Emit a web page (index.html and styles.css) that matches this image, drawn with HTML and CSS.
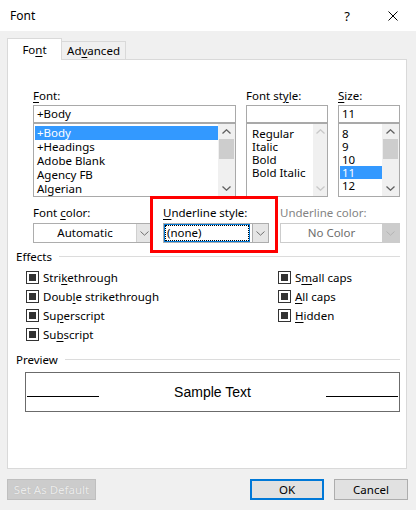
FILE: index.html
```html
<!DOCTYPE html>
<html>
<head>
<meta charset="utf-8">
<link rel="stylesheet" href="styles.css">
</head>
<body>
<div class="window">
  <div class="titlebar">
    <span class="title">Font</span>
    <span class="tbtn help">?</span>
    <span class="tbtn close"><svg width="10" height="10" viewBox="0 0 10 10"><path d="M0.5 0.5L9.5 9.5M9.5 0.5L0.5 9.5" stroke="#000" stroke-width="1" fill="none"/></svg></span>
  </div>
  <div class="body">
    <div class="tabs">
      <div class="tab active">Fo<u>n</u>t</div>
      <div class="tab">Ad<u>v</u>anced</div>
    </div>
    <div class="panel">
      <div class="fontsel">
        <div class="col c-font">
          <div class="label"><u>F</u>ont:</div>
          <div class="input">+Body</div>
          <div class="list list-font">
            <div class="items">
              <div class="item sel">+Body</div>
              <div class="item">+Headings</div>
              <div class="item">Adobe Blank</div>
              <div class="item">Agency FB</div>
              <div class="item">Algerian</div>
            </div>
            <div class="sbar">
              <div class="arr"><svg width="9" height="5" viewBox="0 0 9 5"><path d="M0.5 4.5L4.5 0.8L8.5 4.5" fill="none" stroke="#606060" stroke-width="1.3"/></svg></div>
              <div class="thumb"></div>
              <div class="spacer"></div>
              <div class="arr"><svg width="9" height="5" viewBox="0 0 9 5"><path d="M0.5 0.5L4.5 4.2L8.5 0.5" fill="none" stroke="#606060" stroke-width="1.3"/></svg></div>
            </div>
          </div>
        </div>
        <div class="col c-style">
          <div class="label">Font st<u>y</u>le:</div>
          <div class="input"></div>
          <div class="list list-style">
            <div class="items">
              <div class="item">Regular</div>
              <div class="item">Italic</div>
              <div class="item">Bold</div>
              <div class="item">Bold Italic</div>
            </div>
            <div class="sbar narrow">
              <div class="arr"><svg width="9" height="5" viewBox="0 0 9 5"><path d="M0.5 4.5L4.5 0.8L8.5 4.5" fill="none" stroke="#c8c8c8" stroke-width="1.3"/></svg></div>
              <div class="spacer"></div>
              <div class="arr"><svg width="9" height="5" viewBox="0 0 9 5"><path d="M0.5 0.5L4.5 4.2L8.5 0.5" fill="none" stroke="#c8c8c8" stroke-width="1.3"/></svg></div>
            </div>
          </div>
        </div>
        <div class="col c-size">
          <div class="label"><u>S</u>ize:</div>
          <div class="input">11</div>
          <div class="list list-size">
            <div class="items">
              <div class="item">8</div>
              <div class="item">9</div>
              <div class="item">10</div>
              <div class="item sel">11</div>
              <div class="item">12</div>
            </div>
            <div class="sbar">
              <div class="arr"><svg width="9" height="5" viewBox="0 0 9 5"><path d="M0.5 4.5L4.5 0.8L8.5 4.5" fill="none" stroke="#606060" stroke-width="1.3"/></svg></div>
              <div class="thumb"></div>
              <div class="spacer"></div>
              <div class="arr"><svg width="9" height="5" viewBox="0 0 9 5"><path d="M0.5 0.5L4.5 4.2L8.5 0.5" fill="none" stroke="#606060" stroke-width="1.3"/></svg></div>
            </div>
          </div>
        </div>
      </div>

      <div class="colors">
        <div class="col c-color">
          <div class="label">Font <u>c</u>olor:</div>
          <div class="combo">
            <div class="ctext center">Automatic</div>
            <div class="cbtn"><svg width="9" height="5" viewBox="0 0 9 5"><path d="M0.5 0.5L4.5 4.2L8.5 0.5" fill="none" stroke="#707070" stroke-width="1"/></svg></div>
          </div>
        </div>
        <div class="col c-ustyle">
          <div class="label"><u>U</u>nderline style:</div>
          <div class="combo">
            <div class="ctext focus"><span class="dots">(none)</span></div>
            <div class="cbtn"><svg width="9" height="5" viewBox="0 0 9 5"><path d="M0.5 0.5L4.5 4.2L8.5 0.5" fill="none" stroke="#707070" stroke-width="1"/></svg></div>
          </div>
          <div class="redbox"></div>
        </div>
        <div class="col c-ucolor">
          <div class="label disabled">Underline color:</div>
          <div class="combo dis">
            <div class="ctext center">No Color</div>
            <div class="cbtn"><svg width="9" height="5" viewBox="0 0 9 5"><path d="M0.5 0.5L4.5 4.2L8.5 0.5" fill="none" stroke="#b4b4b4" stroke-width="1"/></svg></div>
          </div>
        </div>
      </div>

      <div class="group"><span>Effects</span><div class="rule"></div></div>
      <div class="effects">
        <div class="chk"><span class="box"></span><span>Stri<u>k</u>ethrough</span></div>
        <div class="chk"><span class="box"></span><span>S<u>m</u>all caps</span></div>
        <div class="chk"><span class="box"></span><span>Doub<u>l</u>e strikethrough</span></div>
        <div class="chk"><span class="box"></span><span><u>A</u>ll caps</span></div>
        <div class="chk"><span class="box"></span><span>Su<u>p</u>erscript</span></div>
        <div class="chk"><span class="box"></span><span><u>H</u>idden</span></div>
        <div class="chk"><span class="box"></span><span>Su<u>b</u>script</span></div>
      </div>

      <div class="group g2"><span>Preview</span><div class="rule"></div></div>
      <div class="preview">
        <div class="pline"></div>
        <div class="ptext">Sample Text</div>
        <div class="pline"></div>
      </div>
    </div>
    <div class="buttons">
      <div class="btn disabledbtn">Set As Default</div>
      <div class="spacer"></div>
      <div class="btn ok">OK</div>
      <div class="btn cancel">Cancel</div>
    </div>
  </div>
</div>
</body>
</html>
```
FILE: styles.css
```css
* { box-sizing: border-box; }
html, body { margin: 0; padding: 0; }
body {
  font-family: "Noto Sans", "Open Sans", sans-serif;
  font-size: 11.5px;
  color: #000;
  background: #f0f0f0;
}
u { text-decoration: underline; text-underline-offset: 2px; }
.window { width: 416px; height: 510px; background: #f0f0f0; }
.titlebar {
  height: 31px; background: #fff; display: flex; align-items: center;
}
.title { flex: 1; padding-left: 10px; font-size: 12px; }
.tbtn { width: 46px; height: 31px; display: flex; align-items: center; justify-content: center; }
.help { font-size: 13px; }
.body { padding: 7px 9px 0 7px; }
.tabs { display: flex; height: 21px; align-items: flex-start; position: relative; z-index: 1; }
.tab {
  height: 18px; margin-top: 3px; padding: 0 9px; border: 1px solid #d9d9d9; border-bottom: none;
  background: #f0f0f0; display: flex; align-items: center; width: 64px; justify-content: center;
}
.tab.active { height: 22px; margin-top: 0; background: #fff; width: 55px; border-right: 1px solid #d9d9d9; }
.tab.active + .tab { border-left: none; }
.panel {
  height: 410px; background: #fff; border: 1px solid #d9d9d9;
}
.label { height: 16px; line-height: 16px; margin-bottom: 2px; white-space: nowrap; }
.label.disabled { color: #838383; }
.fontsel { display: flex; padding: 28px 0 0 25px; }
.fontsel .label { margin-bottom: 1px; }
.col { display: flex; flex-direction: column; }
.c-font { width: 203px; margin-right: 10px; }
.c-style { width: 82px; margin-right: 10px; }
.c-size { width: 62px; }
.input {
  height: 18px; border: 1px solid #a9a9a9; padding: 0 3px; line-height: 16px; background: #fff;
}
.list {
  height: 74px; border: 1px solid #a9a9a9; display: flex; background: #fff;
}
.items { flex: 1; padding: 2px 0 0 1px; }
.item { padding-left: 2px; white-space: nowrap; }
.list-font .item { height: 14px; line-height: 14px; }
.list-style .item, .list-size .item { height: 13px; line-height: 13px; }
.list-style .items { padding-left: 3px; padding-top: 3px; }
.list-size .items { padding-top: 3px; }
.item.sel { background: #3399ff; color: #fff; }
.sbar { width: 17px; background: #f0f0f0; display: flex; flex-direction: column; }
.sbar.narrow { width: 14px; }
.arr { height: 15px; display: flex; align-items: center; justify-content: center; }
.thumb { height: 20px; background: #cdcdcd; margin: 0 1px; }
.sbar .spacer { flex: 1; }

.colors { display: flex; padding: 8px 0 0 25px; }
.c-color { width: 119px; margin-right: 11px; }
.c-ustyle { width: 106px; margin-right: 11px; position: relative; }
.c-ucolor { width: 120px; }
.combo { height: 20px; border: 1px solid #adadad; display: flex; background: #fff; }
.ctext { flex: 1; line-height: 18px; padding-left: 3px; white-space: nowrap; }
.ctext.center { text-align: center; padding-left: 0; }
.cbtn { width: 15px; background: #e5e5e5; border-left: 1px solid #d0d0d0; display: flex; align-items: center; justify-content: center; }
.ctext.focus { border: 1px solid #0078d7; padding: 0; margin-right: 2px; display: flex; }
.dots { flex: 1; border: 1px dotted #000; line-height: 14px; padding-left: 1px; }
.c-ustyle .cbtn { border: 1px solid #adadad; background: #e5e5e5; margin: -1px -1px -1px 0; width: 17px; }
.combo.dis { border-color: #cccccc; }
.combo.dis .ctext { color: #6d6d6d; }
.combo.dis .cbtn { background: #cccccc; border-left: none; width: 17px; }
.redbox {
  position: absolute; left: -13px; top: -9px; width: 128px; height: 57px;
  border: 3px solid #ff0000;
}

.group { display: flex; align-items: center; height: 14px; margin: 6px 0 0 8px; }
.group .rule { flex: 1; height: 1px; background: #dcdcdc; margin: 1px 6px 0 7px; }
.g2 { margin-top: 8px; }
.effects {
  display: grid; grid-template-columns: 252px 1fr; grid-auto-rows: 19px;
  padding-left: 18px; margin-top: 5px;
}
.chk { display: flex; align-items: center; white-space: nowrap; }
.box {
  width: 13px; height: 13px; border: 1px solid #333; padding: 2px; margin-right: 4px; flex: none;
  display: flex;
}
.box::after { content: ""; flex: 1; background: #333; }

.preview {
  height: 40px; margin: 6px 6px 0 17px; border: 1px solid #6b6b6b;
  display: flex; justify-content: space-between; align-items: flex-start; padding: 0 1px;
}
.pline { width: 72px; height: 1px; background: #000; margin-top: 23px; }
.ptext { font-family: "Liberation Sans", Arial, sans-serif; font-size: 14px; line-height: 16px; margin-top: 11px; }

.buttons { display: flex; margin-top: 10px; }
.buttons .spacer { flex: 1; }
.btn {
  height: 21px; display: flex; align-items: center; justify-content: center;
  background: #e1e1e1; border: 1px solid #adadad;
}
.disabledbtn { width: 89px; background: #cccccc; border-color: #bfbfbf; color: #ececec; text-shadow: 0 0 1px #b0b0b0; }
.ok { width: 74px; border: 2px solid #0078d7; margin-right: 10px; }
.cancel { width: 74px; margin-right: -1px; }
```
